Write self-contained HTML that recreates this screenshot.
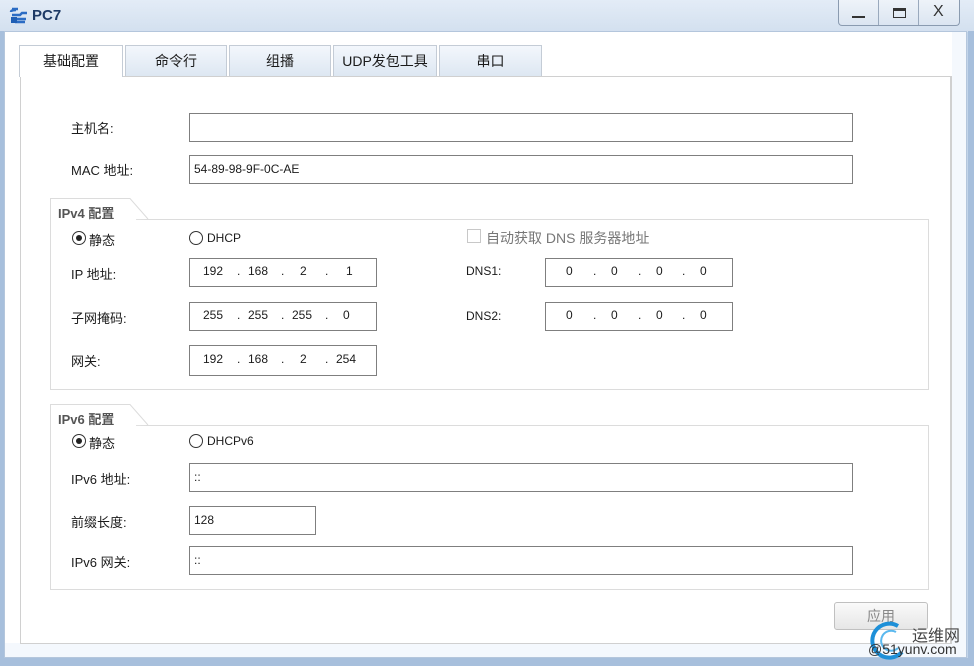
<!DOCTYPE html>
<html><head><meta charset="utf-8"><style>
*{margin:0;padding:0;box-sizing:border-box}
body{width:974px;height:666px;overflow:hidden;background:#c3d5ea;font-family:"Liberation Sans","Noto Sans CJK SC",sans-serif;font-size:13px;color:#1b1b1b;position:relative}
.a{position:absolute}
.title{left:0;top:0;width:974px;height:32px;background:linear-gradient(#e3ecf7,#d3e0ef)}
.body{left:4px;top:31px;width:963px;height:627px;background:#f4f8fd;border:1px solid #b4c6dc}
.white{left:5px;top:32px;width:947px;height:611px;background:#fff}
.page{left:20px;top:76px;width:932px;height:568px;border:1px solid #d0d0d0;border-right:2px solid #d0d0d0;background:#fff}
.tab{top:45px;height:31px;border:1px solid #c4ccd6;border-bottom:none;background:linear-gradient(#f3f7fc,#dde7f2);text-align:center;line-height:31px;font-size:14px}
.inp{border:1px solid #7f7f7f;background:#fff;height:29px;line-height:27px;padding-left:4px;font-size:12px}
.lbl{font-size:13px}
.grp{border:1px solid #dcdcdc}
.gl{font-weight:bold;color:#555;font-size:13px}
.radio{width:14px;height:14px;border:1px solid #333;border-radius:50%;background:#fff}
.o{position:absolute;font-size:12px}
</style></head><body>
<div class="a title"></div>
<svg class="a" style="left:9px;top:6px" width="20" height="20" viewBox="0 0 20 20"><path d="M3 3h6M2 6c0-2 3-2 5-2M3 9h8l2-2h5M3 13h14M6 16h10" stroke="#2b6cc4" stroke-width="2.4" fill="none"/><rect x="2" y="11" width="6" height="6" fill="#1f5fb5"/></svg>
<div class="a" style="left:32px;top:7px;font-size:15px;font-weight:bold;color:#1d3a66">PC7</div>
<div class="a" style="left:838px;top:0;width:122px;height:26px;border:1px solid #8a9bb0;border-top:none;border-radius:0 0 4px 4px;background:linear-gradient(#eef3f9,#dbe5f1)"></div>
<div class="a" style="left:852px;top:16px;width:13px;height:2px;background:#333"></div>
<div class="a" style="left:878px;top:0;width:1px;height:25px;background:#99a9bd"></div>
<div class="a" style="left:918px;top:0;width:1px;height:25px;background:#99a9bd"></div>
<div class="a" style="left:893px;top:8px;width:13px;height:10px;border:1px solid #333;border-top:3px solid #333"></div>
<div class="a" style="left:933px;top:3px;font-size:16px;color:#333">X</div>
<div class="a body"></div>
<div class="a white"></div>
<div class="a" style="left:968px;top:31px;width:6px;height:635px;background:#a7bfdc"></div>
<div class="a" style="left:0;top:658px;width:974px;height:8px;background:#a7bfdc"></div>
<div class="a" style="left:0;top:31px;width:4px;height:635px;background:#a7bfdc"></div>
<div class="a page"></div>
<div class="a tab" style="left:19px;width:104px;background:#fff;height:32px">基础配置</div>
<div class="a tab" style="left:125px;width:102px">命令行</div>
<div class="a tab" style="left:229px;width:102px">组播</div>
<div class="a tab" style="left:333px;width:104px">UDP发包工具</div>
<div class="a tab" style="left:439px;width:103px">串口</div>

<div class="a lbl" style="left:71px;top:118px">主机名:</div>
<div class="a inp" style="left:189px;top:113px;width:664px;height:29px"></div>
<div class="a lbl" style="left:71px;top:160px">MAC 地址:</div>
<div class="a inp" style="left:189px;top:155px;width:664px;height:29px">54-89-98-9F-0C-AE</div>

<div class="a grp" style="left:50px;top:219px;width:879px;height:171px"></div>
<svg class="a" style="left:50px;top:198px" width="100" height="23"><path d="M0.5 22V0.5H80L98 21" fill="#fff" stroke="#dcdcdc"/><rect x="1" y="20" width="85" height="3" fill="#fff"/></svg>
<div class="a gl" style="left:58px;top:203px">IPv4 配置</div>
<div class="a radio" style="left:72px;top:231px"></div><div class="a" style="left:76px;top:235px;width:6px;height:6px;border-radius:50%;background:#222"></div>
<div class="a lbl" style="left:89px;top:230px">静态</div>
<div class="a radio" style="left:189px;top:231px"></div>
<div class="a" style="left:207px;top:231px;font-size:12px">DHCP</div>
<div class="a" style="left:467px;top:229px;width:14px;height:14px;border:1px solid #c8c8c8"></div>
<div class="a" style="left:486px;top:228px;color:#777;font-size:14px">自动获取 DNS 服务器地址</div>

<div class="a lbl" style="left:71px;top:264px">IP 地址:</div>
<div class="a inp" style="left:189px;top:258px;width:188px"></div>
<span class="o" style="left:203px;top:264px">192</span><span class="o" style="left:237px;top:264px">.</span><span class="o" style="left:248px;top:264px">168</span><span class="o" style="left:281px;top:264px">.</span><span class="o" style="left:300px;top:264px">2</span><span class="o" style="left:325px;top:264px">.</span><span class="o" style="left:346px;top:264px">1</span>
<div class="a lbl" style="left:71px;top:308px">子网掩码:</div>
<div class="a inp" style="left:189px;top:302px;width:188px"></div>
<span class="o" style="left:203px;top:308px">255</span><span class="o" style="left:237px;top:308px">.</span><span class="o" style="left:248px;top:308px">255</span><span class="o" style="left:281px;top:308px">.</span><span class="o" style="left:292px;top:308px">255</span><span class="o" style="left:325px;top:308px">.</span><span class="o" style="left:343px;top:308px">0</span>
<div class="a lbl" style="left:71px;top:351px">网关:</div>
<div class="a inp" style="left:189px;top:345px;width:188px;height:31px"></div>
<span class="o" style="left:203px;top:352px">192</span><span class="o" style="left:237px;top:352px">.</span><span class="o" style="left:248px;top:352px">168</span><span class="o" style="left:281px;top:352px">.</span><span class="o" style="left:300px;top:352px">2</span><span class="o" style="left:325px;top:352px">.</span><span class="o" style="left:336px;top:352px">254</span>

<div class="a lbl" style="left:466px;top:264px;font-size:12px">DNS1:</div>
<div class="a inp" style="left:545px;top:258px;width:188px"></div>
<span class="o" style="left:566px;top:264px">0</span><span class="o" style="left:593px;top:264px">.</span><span class="o" style="left:611px;top:264px">0</span><span class="o" style="left:638px;top:264px">.</span><span class="o" style="left:656px;top:264px">0</span><span class="o" style="left:682px;top:264px">.</span><span class="o" style="left:700px;top:264px">0</span>
<div class="a lbl" style="left:466px;top:309px;font-size:12px">DNS2:</div>
<div class="a inp" style="left:545px;top:302px;width:188px"></div>
<span class="o" style="left:566px;top:308px">0</span><span class="o" style="left:593px;top:308px">.</span><span class="o" style="left:611px;top:308px">0</span><span class="o" style="left:638px;top:308px">.</span><span class="o" style="left:656px;top:308px">0</span><span class="o" style="left:682px;top:308px">.</span><span class="o" style="left:700px;top:308px">0</span>

<div class="a grp" style="left:50px;top:425px;width:879px;height:165px"></div>
<svg class="a" style="left:50px;top:404px" width="100" height="23"><path d="M0.5 22V0.5H80L98 21" fill="#fff" stroke="#dcdcdc"/><rect x="1" y="20" width="85" height="3" fill="#fff"/></svg>
<div class="a gl" style="left:58px;top:409px">IPv6 配置</div>
<div class="a radio" style="left:72px;top:434px"></div><div class="a" style="left:76px;top:438px;width:6px;height:6px;border-radius:50%;background:#222"></div>
<div class="a lbl" style="left:89px;top:433px">静态</div>
<div class="a radio" style="left:189px;top:434px"></div>
<div class="a" style="left:207px;top:434px;font-size:12px">DHCPv6</div>
<div class="a lbl" style="left:71px;top:469px">IPv6 地址:</div>
<div class="a inp" style="left:189px;top:463px;width:664px">::</div>
<div class="a lbl" style="left:71px;top:512px">前缀长度:</div>
<div class="a inp" style="left:189px;top:506px;width:127px">128</div>
<div class="a lbl" style="left:71px;top:552px">IPv6 网关:</div>
<div class="a inp" style="left:189px;top:546px;width:664px">::</div>

<div class="a" style="left:834px;top:602px;width:94px;height:28px;border:1px solid #c0c0c0;border-radius:3px;background:linear-gradient(#fafafa,#e6e6e6);text-align:center;line-height:26px;color:#888;font-size:14px">应用</div>
<svg class="a" style="left:868px;top:618px" width="40" height="44"><path d="M30 8A17 17 0 1 0 34 34" stroke="#1e90d8" stroke-width="4" fill="none"/><path d="M28 14A10 10 0 1 0 30 30" stroke="#5ab8ee" stroke-width="2" fill="none"/></svg>
<div class="a" style="left:912px;top:622px;font-size:16px;color:#444">运维网</div>
<div class="a" style="left:868px;top:641px;font-size:14px;color:#333">@51yunv.com</div>
</body></html>
